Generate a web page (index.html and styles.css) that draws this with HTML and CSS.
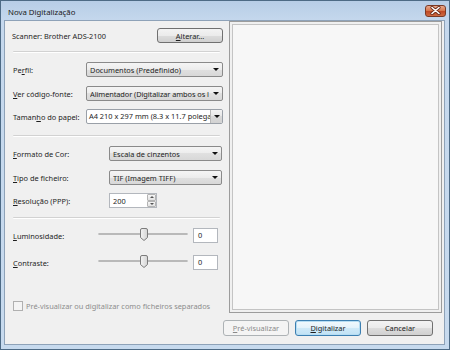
FILE: index.html
```html
<!DOCTYPE html>
<html lang="pt">
<head>
  <meta charset="UTF-8">
  <title>Nova Digitalização</title>
  <link rel="stylesheet" href="styles.css">
</head>
<body>

  <div class="window">
    <!-- Barra de título -->
    <div class="titlebar">
      <span class="title">Nova Digitalização</span>
      <span class="close">
        <svg width="11" height="9" viewBox="0 0 11 9">
          <path d="M2 1.5 L9 7.5 M9 1.5 L2 7.5" stroke="#6b2a18" stroke-width="3.2" stroke-linecap="round"/>
          <path d="M2 1.5 L9 7.5 M9 1.5 L2 7.5" stroke="#ffffff" stroke-width="1.6" stroke-linecap="round"/>
        </svg>
      </span>
    </div>

    <div class="client">
      <div class="main">

        <!-- Coluna das definições -->
        <div class="settings">
          <div class="scanner-row">
            <span class="scanner-name">Scanner: Brother ADS-2100</span>
            <span class="btn btn-alterar"><u>A</u>lterar...</span>
          </div>

          <div class="sep"></div>

          <div class="field group1 first">
            <span class="label">Pe<u>r</u>fil:</span>
            <div class="combo"><span class="combo-text">Documentos (Predefinido)</span><span class="arrow"></span></div>
          </div>
          <div class="field group1">
            <span class="label"><u>V</u>er código-fonte:</span>
            <div class="combo"><span class="combo-text tight">Alimentador (Digitalizar ambos os l</span><span class="arrow"></span></div>
          </div>
          <div class="field group1 third">
            <span class="label">Taman<u>h</u>o do papel:</span>
            <div class="combo-edit">
              <span class="edit-text">A4 210 x 297 mm (8.3 x 11.7 polega</span>
              <span class="drop"><span class="arrow"></span></span>
            </div>
          </div>

          <div class="sep sep2"></div>

          <div class="field group2 first">
            <span class="label"><u>F</u>ormato de Cor:</span>
            <div class="combo"><span class="combo-text">Escala de cinzentos</span><span class="arrow"></span></div>
          </div>
          <div class="field group2">
            <span class="label"><u>T</u>ipo de ficheiro:</span>
            <div class="combo"><span class="combo-text">TIF (Imagem TIFF)</span><span class="arrow"></span></div>
          </div>
          <div class="field group2 spin-row">
            <span class="label"><u>R</u>esolução (PPP):</span>
            <div class="spinner">
              <span class="spin-value">200</span>
              <span class="spin-btns">
                <span class="spin-up"></span>
                <span class="spin-down"></span>
              </span>
            </div>
          </div>

          <div class="sep sep3"></div>

          <div class="field slider-row first">
            <span class="label"><u>L</u>uminosidade:</span>
            <div class="slider">
              <div class="track"></div>
              <svg class="thumb" width="8" height="13" viewBox="0 0 8 13">
                <defs>
                  <linearGradient id="tg" x1="0" x2="1" y1="0" y2="0">
                    <stop offset="0" stop-color="#f4f4f4"/>
                    <stop offset="1" stop-color="#d4d4d4"/>
                  </linearGradient>
                </defs>
                <path d="M2 0.5 H6 Q7.5 0.5 7.5 2 V9.5 L4 12.5 L0.5 9.5 V2 Q0.5 0.5 2 0.5 Z" fill="url(#tg)" stroke="#7c7c7c"/>
              </svg>
            </div>
            <div class="value-box">0</div>
          </div>
          <div class="field slider-row second">
            <span class="label"><u>C</u>ontraste:</span>
            <div class="slider">
              <div class="track"></div>
              <svg class="thumb" width="8" height="13" viewBox="0 0 8 13">
                <path d="M2 0.5 H6 Q7.5 0.5 7.5 2 V9.5 L4 12.5 L0.5 9.5 V2 Q0.5 0.5 2 0.5 Z" fill="url(#tg)" stroke="#7c7c7c"/>
              </svg>
            </div>
            <div class="value-box">0</div>
          </div>

          <div class="check-row">
            <span class="checkbox"></span>
            <span class="check-label">Pré-visualizar ou digitalizar como ficheiros separados</span>
          </div>
        </div>

        <!-- Pré-visualização -->
        <div class="preview">
          <div class="preview-inner"></div>
        </div>
      </div>

      <!-- Botões -->
      <div class="buttons">
        <span class="btn btn-disabled"><u>P</u>ré-visualizar</span>
        <span class="btn btn-default"><u>D</u>igitalizar</span>
        <span class="btn">Cancelar</span>
      </div>
    </div>
  </div>

</body>
</html>
```

FILE: styles.css
```css
html, body {
  margin: 0;
  padding: 0;
  height: 100%;
  overflow: hidden;
}

body {
  background: #23465f;
  font-family: "Noto Sans", "Liberation Sans", sans-serif;
  font-size: 7.4px;
  color: #1e1e1e;
}

u {
  text-decoration: underline;
  text-underline-offset: 1px;
}

/* Janela */
.window {
  box-sizing: border-box;
  width: 450px;
  height: 350px;
  border: 1px solid #4d6a85;
  background: linear-gradient(#b7cde6, #c5d8ed 20px, #c7daee);
  padding: 0 4px 4px 3px;
  display: flex;
  flex-direction: column;
}

.titlebar {
  height: 19px;
  display: flex;
  align-items: center;
  justify-content: space-between;
  padding-top: 2px;
  box-sizing: border-box;
}

.title {
  font-size: 7.8px;
  color: #1a1a1a;
  padding-left: 4px;
}

.close {
  width: 21px;
  height: 12px;
  box-sizing: border-box;
  margin-right: -1px;
  margin-top: -2px;
  border: 1px solid #7a3a26;
  border-radius: 3px;
  background: linear-gradient(#e9a98e, #d6784f 45%, #c04a26 55%, #cc6a42);
  display: flex;
  align-items: center;
  justify-content: center;
}

.close svg {
  display: block;
}

.client {
  flex: 1;
  background: #f0f0f0;
  border: 1px solid #8ea2b8;
  display: flex;
  flex-direction: column;
}

.main {
  display: flex;
  height: 292px;
}

/* Coluna esquerda */
.settings {
  width: 224px;
  box-sizing: border-box;
  padding: 0 6px 0 8px;
  display: flex;
  flex-direction: column;
}

.scanner-row {
  margin-top: 7px;
  display: flex;
  align-items: center;
  justify-content: space-between;
}

.scanner-name {
  margin-left: -1px;
}

.btn {
  box-sizing: border-box;
  height: 16px;
  border: 1px solid #707070;
  border-radius: 3px;
  background: linear-gradient(#f3f3f3, #ebebeb 50%, #dddddd 50%, #d0d0d0);
  display: flex;
  align-items: center;
  justify-content: center;
  color: #1e1e1e;
}

.btn-alterar {
  width: 66px;
  height: 15px;
}

.sep {
  margin: 8px 3px 0 0;
  height: 0;
  border-top: 1px solid #d2d2d2;
  border-bottom: 1px solid #ffffff;
  border-radius: 1px;
}

.sep2 {
  margin-top: 11px;
}

.sep3 {
  margin-top: 9px;
}

.field {
  display: flex;
  align-items: center;
  margin-top: 9px;
}

.field.third {
  margin-top: 8px;
}

.label {
  flex-shrink: 0;
}

.group1 .label {
  width: 73px;
}

.group2 .label {
  width: 96px;
}

.combo {
  box-sizing: border-box;
  height: 15px;
  border: 1px solid #8a8a8a;
  border-radius: 2px;
  background: linear-gradient(#f5f5f5, #ececec 50%, #e0e0e0 50%, #d8d8d8);
  display: flex;
  align-items: center;
  padding: 0 3px 0 3px;
  overflow: hidden;
}

.group1 .combo {
  width: 137px;
}

.group2 .combo {
  width: 113px;
}

.combo-text {
  flex: 1;
  white-space: nowrap;
  overflow: hidden;
}

.combo-text.tight {
  letter-spacing: -0.08px;
}

.arrow {
  width: 0;
  height: 0;
  border-left: 3px solid transparent;
  border-right: 3px solid transparent;
  border-top: 3px solid #111;
  margin-left: 2px;
  flex-shrink: 0;
}

.combo-edit {
  box-sizing: border-box;
  width: 137px;
  height: 15px;
  border: 1px solid #9aa0a8;
  border-radius: 2px;
  background: #ffffff;
  display: flex;
  overflow: hidden;
}

.edit-text {
  flex: 1;
  white-space: nowrap;
  overflow: hidden;
  padding-left: 2px;
  line-height: 13px;
  border-right: 1px solid #b8b8b8;
}

.drop {
  width: 11px;
  background: linear-gradient(#f3f3f3, #e6e6e6 50%, #d9d9d9 50%, #d2d2d2);
  display: flex;
  align-items: center;
  justify-content: center;
}

.drop .arrow {
  margin-left: 0;
}

/* Resolução */
.spin-row {
  margin-top: 8px;
}

.spinner {
  box-sizing: border-box;
  width: 48px;
  height: 15px;
  border: 1px solid #b3b7bd;
  background: #ffffff;
  display: flex;
  align-items: center;
}

.spin-value {
  flex: 1;
  padding-left: 3px;
}

.spin-btns {
  width: 9px;
  height: 13px;
  display: flex;
  flex-direction: column;
}

.spin-up, .spin-down {
  flex: 1;
  border: 1px solid #b4b4b4;
  border-radius: 1px;
  background: linear-gradient(#f6f6f6, #e2e2e2);
  position: relative;
}

.spin-up::after, .spin-down::after {
  content: "";
  position: absolute;
  left: 2px;
  top: 1px;
  border-left: 2px solid transparent;
  border-right: 2px solid transparent;
}

.spin-up::after {
  border-bottom: 2px solid #555;
}

.spin-down::after {
  border-top: 2px solid #555;
}

/* Sliders */
.slider-row .label {
  width: 85px;
}

.slider-row.first {
  margin-top: 9px;
}

.slider-row.second {
  margin-top: 12px;
}

.slider {
  position: relative;
  width: 90px;
  height: 15px;
  display: flex;
  align-items: center;
}

.track {
  width: 100%;
  height: 2px;
  border: 1px solid #b9b9b9;
  border-radius: 1px;
  background: #e7eaea;
  box-sizing: border-box;
  margin-top: -4px;
}

.thumb {
  position: absolute;
  left: 42px;
  top: 0;
}

.value-box {
  box-sizing: border-box;
  width: 25px;
  height: 15px;
  margin-left: 5px;
  border: 1px solid #b3b7bd;
  background: #ffffff;
  padding-left: 4px;
  line-height: 13px;
}

/* Caixa de verificação */
.check-row {
  margin-top: auto;
  margin-bottom: 2px;
  display: flex;
  align-items: center;
}

.checkbox {
  box-sizing: border-box;
  width: 10px;
  height: 10px;
  border: 1px solid #b0b0b0;
  background: #f4f4f4;
  margin-right: 3px;
}

.check-label {
  color: #8d8d8d;
}

/* Pré-visualização */
.preview {
  width: 213px;
  box-sizing: border-box;
  border: 1px solid #9c9c9c;
  padding: 2px;
}

.preview-inner {
  height: 100%;
  box-sizing: border-box;
  border: 1px solid #c4c4c4;
  background: #f7f7f7;
}

/* Botões inferiores */
.buttons {
  display: flex;
  justify-content: flex-end;
  gap: 6px;
  margin-top: 7px;
  padding-right: 11px;
}

.buttons .btn {
  width: 66px;
}

.btn-disabled {
  border-color: #adb2b5;
  background: #f4f4f4;
  color: #8a8a8a;
}

.btn-default {
  border-color: #3c7fb1;
  background: linear-gradient(#f2f9fd, #e3f2fb 50%, #cfe9f8 50%, #c0e2f5);
  box-shadow: inset 0 0 0 1px #b6ddf3;
}
```
